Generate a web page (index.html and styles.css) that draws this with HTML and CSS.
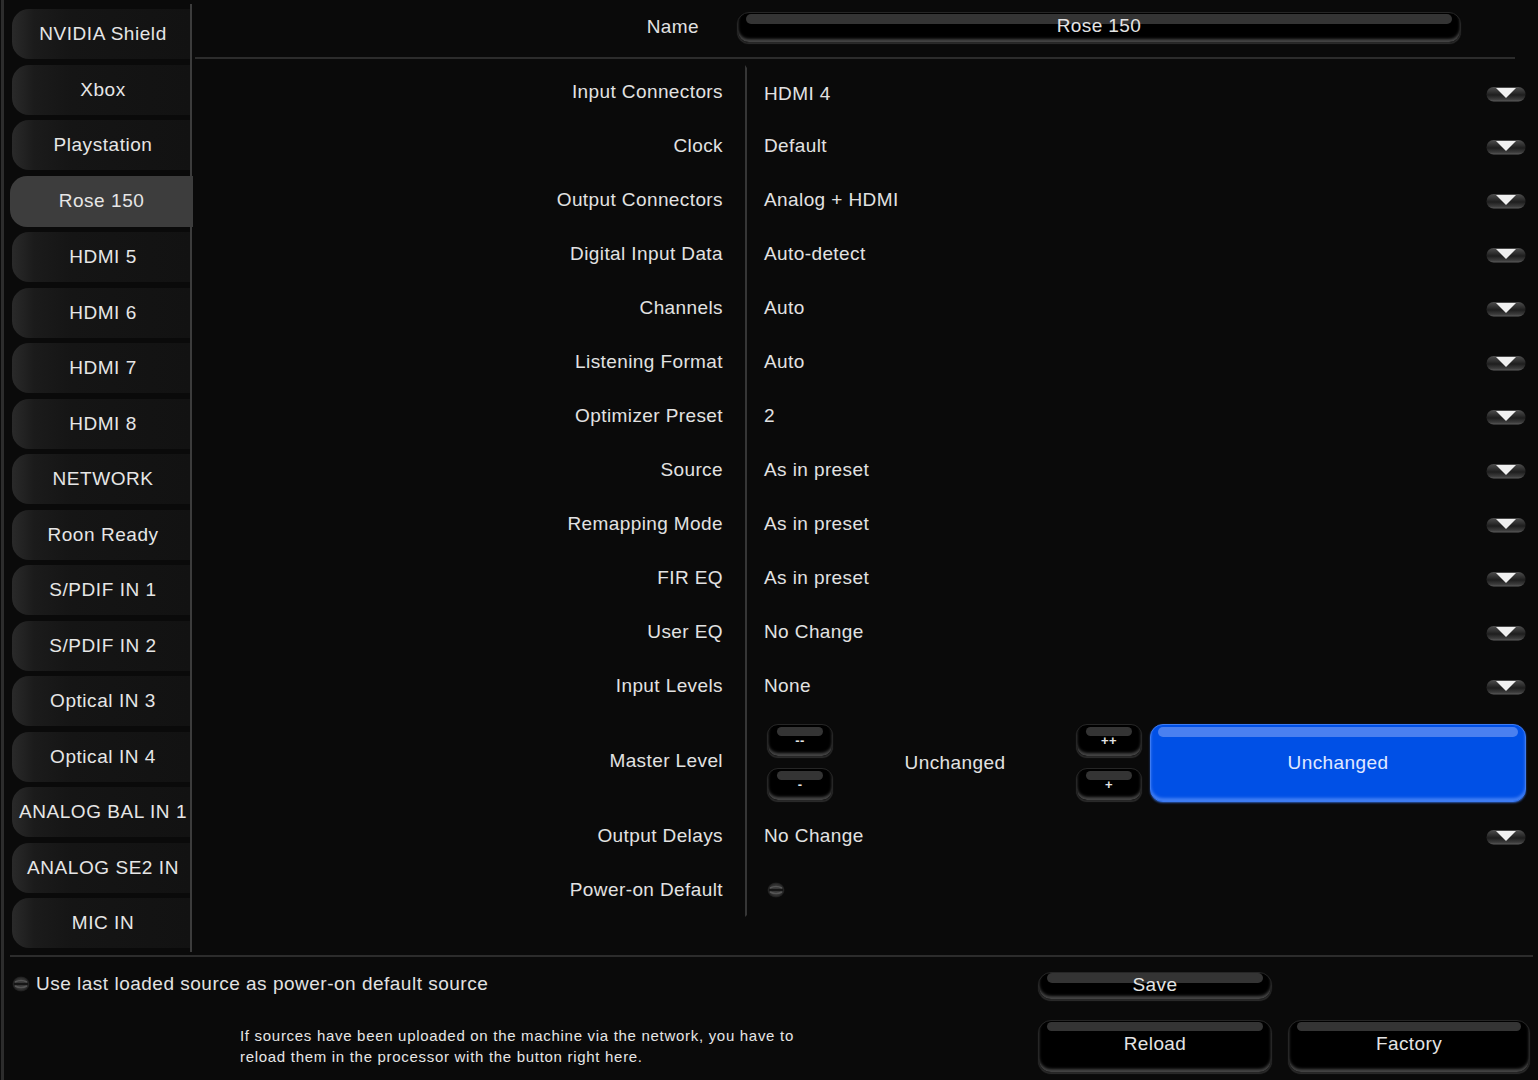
FILE: index.html
```html
<!DOCTYPE html>
<html>
<head>
<meta charset="utf-8">
<link rel="stylesheet" href="styles.css">
</head>
<body>
<svg class="defs" width="0" height="0">
  <defs>
    <linearGradient id="arrowBg" x1="0" y1="0" x2="0" y2="1">
      <stop offset="0" stop-color="#4e4e4e"/>
      <stop offset="0.55" stop-color="#1e1e1e"/>
      <stop offset="0.85" stop-color="#3c3c3c"/>
      <stop offset="1" stop-color="#5c5c5c"/>
    </linearGradient>
    <radialGradient id="radioBg" cx="0.5" cy="0.5" r="0.5">
      <stop offset="0" stop-color="#3a3a3a"/>
      <stop offset="0.7" stop-color="#333"/>
      <stop offset="1" stop-color="#1a1a1a"/>
    </radialGradient>
  </defs>
</svg>
<div class="app">
  <div class="top">
    <nav class="sidebar">
      <div class="src">NVIDIA Shield</div>
      <div class="src">Xbox</div>
      <div class="src">Playstation</div>
      <div class="src active">Rose 150</div>
      <div class="src">HDMI 5</div>
      <div class="src">HDMI 6</div>
      <div class="src">HDMI 7</div>
      <div class="src">HDMI 8</div>
      <div class="src">NETWORK</div>
      <div class="src">Roon Ready</div>
      <div class="src">S/PDIF IN 1</div>
      <div class="src">S/PDIF IN 2</div>
      <div class="src">Optical IN 3</div>
      <div class="src">Optical IN 4</div>
      <div class="src">ANALOG BAL IN 1</div>
      <div class="src">ANALOG SE2 IN</div>
      <div class="src">MIC IN</div>
    </nav>
    <main class="main">
      <div class="header">
        <div class="name-label">Name</div>
        <div class="name-input btn">Rose 150</div>
      </div>
      <div class="form">
        <div class="row"><div class="label">Input Connectors</div><div class="value"><span class="val">HDMI 4</span><svg class="arrow" width="40" height="16" viewBox="0 0 40 16"><rect x="0.5" y="1" width="39" height="14.5" rx="7.2" fill="url(#arrowBg)"/><path d="M10 2 L30 2 L20 12 Z" fill="#f0f0f0"/></svg></div></div>
        <div class="row"><div class="label">Clock</div><div class="value"><span class="val">Default</span><svg class="arrow" width="40" height="16" viewBox="0 0 40 16"><rect x="0.5" y="1" width="39" height="14.5" rx="7.2" fill="url(#arrowBg)"/><path d="M10 2 L30 2 L20 12 Z" fill="#f0f0f0"/></svg></div></div>
        <div class="row"><div class="label">Output Connectors</div><div class="value"><span class="val">Analog + HDMI</span><svg class="arrow" width="40" height="16" viewBox="0 0 40 16"><rect x="0.5" y="1" width="39" height="14.5" rx="7.2" fill="url(#arrowBg)"/><path d="M10 2 L30 2 L20 12 Z" fill="#f0f0f0"/></svg></div></div>
        <div class="row"><div class="label">Digital Input Data</div><div class="value"><span class="val">Auto-detect</span><svg class="arrow" width="40" height="16" viewBox="0 0 40 16"><rect x="0.5" y="1" width="39" height="14.5" rx="7.2" fill="url(#arrowBg)"/><path d="M10 2 L30 2 L20 12 Z" fill="#f0f0f0"/></svg></div></div>
        <div class="row"><div class="label">Channels</div><div class="value"><span class="val">Auto</span><svg class="arrow" width="40" height="16" viewBox="0 0 40 16"><rect x="0.5" y="1" width="39" height="14.5" rx="7.2" fill="url(#arrowBg)"/><path d="M10 2 L30 2 L20 12 Z" fill="#f0f0f0"/></svg></div></div>
        <div class="row"><div class="label">Listening Format</div><div class="value"><span class="val">Auto</span><svg class="arrow" width="40" height="16" viewBox="0 0 40 16"><rect x="0.5" y="1" width="39" height="14.5" rx="7.2" fill="url(#arrowBg)"/><path d="M10 2 L30 2 L20 12 Z" fill="#f0f0f0"/></svg></div></div>
        <div class="row"><div class="label">Optimizer Preset</div><div class="value"><span class="val">2</span><svg class="arrow" width="40" height="16" viewBox="0 0 40 16"><rect x="0.5" y="1" width="39" height="14.5" rx="7.2" fill="url(#arrowBg)"/><path d="M10 2 L30 2 L20 12 Z" fill="#f0f0f0"/></svg></div></div>
        <div class="row"><div class="label">Source</div><div class="value"><span class="val">As in preset</span><svg class="arrow" width="40" height="16" viewBox="0 0 40 16"><rect x="0.5" y="1" width="39" height="14.5" rx="7.2" fill="url(#arrowBg)"/><path d="M10 2 L30 2 L20 12 Z" fill="#f0f0f0"/></svg></div></div>
        <div class="row"><div class="label">Remapping Mode</div><div class="value"><span class="val">As in preset</span><svg class="arrow" width="40" height="16" viewBox="0 0 40 16"><rect x="0.5" y="1" width="39" height="14.5" rx="7.2" fill="url(#arrowBg)"/><path d="M10 2 L30 2 L20 12 Z" fill="#f0f0f0"/></svg></div></div>
        <div class="row"><div class="label">FIR EQ</div><div class="value"><span class="val">As in preset</span><svg class="arrow" width="40" height="16" viewBox="0 0 40 16"><rect x="0.5" y="1" width="39" height="14.5" rx="7.2" fill="url(#arrowBg)"/><path d="M10 2 L30 2 L20 12 Z" fill="#f0f0f0"/></svg></div></div>
        <div class="row"><div class="label">User EQ</div><div class="value"><span class="val">No Change</span><svg class="arrow" width="40" height="16" viewBox="0 0 40 16"><rect x="0.5" y="1" width="39" height="14.5" rx="7.2" fill="url(#arrowBg)"/><path d="M10 2 L30 2 L20 12 Z" fill="#f0f0f0"/></svg></div></div>
        <div class="row"><div class="label">Input Levels</div><div class="value"><span class="val">None</span><svg class="arrow" width="40" height="16" viewBox="0 0 40 16"><rect x="0.5" y="1" width="39" height="14.5" rx="7.2" fill="url(#arrowBg)"/><path d="M10 2 L30 2 L20 12 Z" fill="#f0f0f0"/></svg></div></div>
        <div class="row master"><div class="label">Master Level</div><div class="value">
          <div class="stepcol"><div class="btn step">--</div><div class="btn step">-</div></div>
          <div class="level-text">Unchanged</div>
          <div class="stepcol"><div class="btn step">++</div><div class="btn step">+</div></div>
          <div class="blue-btn">Unchanged</div>
        </div></div>
        <div class="row"><div class="label">Output Delays</div><div class="value"><span class="val">No Change</span><svg class="arrow" width="40" height="16" viewBox="0 0 40 16"><rect x="0.5" y="1" width="39" height="14.5" rx="7.2" fill="url(#arrowBg)"/><path d="M10 2 L30 2 L20 12 Z" fill="#f0f0f0"/></svg></div></div>
        <div class="row"><div class="label">Power-on Default</div><div class="value"><svg class="radio radio-pod" width="18" height="16" viewBox="0 0 18 16"><ellipse cx="9" cy="8" rx="8.5" ry="7.5" fill="url(#radioBg)"/><path d="M3 6 Q9 3 15 6 M3 10 Q9 13 15 10" stroke="#555" stroke-width="1.5" fill="none"/><path d="M2 8 H16" stroke="#161616" stroke-width="2"/></svg></div></div>
      </div>
    </main>
  </div>
  <div class="bottom">
    <div class="bottom-left">
      <div class="check"><svg class="radio" width="18" height="16" viewBox="0 0 18 16"><ellipse cx="9" cy="8" rx="8.5" ry="7.5" fill="url(#radioBg)"/><path d="M3 6 Q9 3 15 6 M3 10 Q9 13 15 10" stroke="#555" stroke-width="1.5" fill="none"/><path d="M2 8 H16" stroke="#161616" stroke-width="2"/></svg><span>Use last loaded source as power-on default source</span></div>
      <p class="help">If sources have been uploaded on the machine via the network, you have to<br>reload them in the processor with the button right here.</p>
    </div>
    <div class="actions">
      <div class="btn act save">Save</div>
      <div class="spacer"></div>
      <div class="btn act big">Reload</div>
      <div class="btn act big">Factory</div>
    </div>
  </div>
</div>
</body>
</html>
```
FILE: styles.css
```css
* { box-sizing: border-box; }
html, body { margin: 0; padding: 0; }
body {
  width: 1538px;
  height: 1080px;
  overflow: hidden;
  background: #0a0a0a;
  color: #e2e2e2;
  font-family: "Liberation Sans", Arial, sans-serif;
  font-size: 19px;
  letter-spacing: 0.4px;
}
.defs { display: block; width: 0; height: 0; }
.app {
  height: 1080px;
  margin-left: 1px;
  border-left: 3px solid #2c2c2c;
  display: flex;
  flex-direction: column;
}
.top { display: flex; height: 955px; }

/* sidebar */
.sidebar {
  width: 188px;
  flex: none;
  margin-top: 4px;
  margin-bottom: 3px;
  padding: 5px 0 0 8px;
  border-right: 2px solid #3c3c3c;
  display: flex;
  flex-direction: column;
  gap: 5.5px;
}
.src {
  width: 178px;
  height: 50px;
  flex: none;
  display: flex;
  align-items: center;
  justify-content: center;
  white-space: nowrap;
  padding-left: 4px;
  border-radius: 17px 0 0 17px;
  background: linear-gradient(to right, #2a2a2a 0, #1b1b1b 22px, #151515 60px, #121212 100%);
  color: #e6e6e6;
  letter-spacing: 0.55px;
}
.src.active {
  width: 183px;
  margin-left: -2px;
  margin-right: -3px;
  position: relative;
  background: #3d3d3d;
  height: 51px;
  padding-left: 0;
}

/* main */
.main { flex: 1; display: flex; flex-direction: column; }
.header {
  height: 59px;
  margin: 0 23px 0 3px;
  border-bottom: 2px solid #2c2c2c;
  display: flex;
  align-items: center;
}
.name-label { width: 504px; text-align: right; margin-top: -4px; }
.name-input {
  margin-left: 38px;
  width: 724px;
  height: 31px;
  margin-top: -3px;
  border-radius: 15px;
  padding-bottom: 2px;
}
.name-input::before { left: 8px; right: 7px; height: 11px; top: 1px; border-radius: 6px; }

.btn {
  position: relative;
  z-index: 0;
  background: #000;
  border: 1px solid #262626;
  border-radius: 12px;
  box-shadow: inset 0 -3px 3px rgba(115,115,115,0.6), 0 1px 1px #2d2d2d;
  display: flex;
  align-items: center;
  justify-content: center;
  color: #e4e4e4;
}
.btn::before {
  content: "";
  position: absolute;
  z-index: -1;
  top: 1px;
  left: 8px;
  right: 8px;
  height: 10px;
  border-radius: 6px;
  background: #343434;
}

.form { padding-top: 6px; display: flex; flex-direction: column; }
.row { display: flex; height: 54px; }
.label {
  width: 531px;
  flex: none;
  display: flex;
  align-items: center;
  justify-content: flex-end;
}
.value {
  flex: 1;
  margin-left: 22px;
  border-left: 2px solid #363636;
  padding: 0 12px 0 17px;
  display: flex;
  align-items: center;
}
.row:first-child .value { border-top: 3px solid #0a0a0a; }
.row:last-child .value { border-bottom: 2px solid #0a0a0a; }
.val { flex: 1; }
.arrow { flex: none; display: block; margin-top: 1px; }

.master { height: 96px; }
.master .value { padding-top: 3px; }
.stepcol {
  display: flex;
  flex-direction: column;
  gap: 11px;
  margin-left: 3px;
}
.step {
  width: 66px;
  height: 33px;
  font-size: 13px;
  font-weight: bold;
  border-radius: 11px;
}
.step::before { left: 9px; right: 9px; top: 2px; height: 9px; }
.level-text { flex: 1; text-align: center; padding-left: 4px; }
.blue-btn {
  position: relative;
  z-index: 0;
  margin-left: 8px;
  width: 376px;
  height: 78px;
  background: #0050e6;
  border: 1px solid #3d7bf2;
  border-radius: 13px;
  box-shadow: inset 0 -3px 3px rgba(120,165,255,0.55), 0 1px 2px #2b55a8;
  display: flex;
  align-items: center;
  justify-content: center;
  color: #e0e8ff;
}
.blue-btn::before {
  content: "";
  position: absolute;
  z-index: -1;
  top: 2px;
  left: 7px;
  right: 7px;
  height: 10px;
  border-radius: 6px;
  background: #4a80f0;
}
.radio { display: block; flex: none; }
.radio-pod { margin-left: 3px; margin-top: 2px; }

/* bottom */
.bottom {
  flex: 1;
  margin: 0 5px 0 6px;
  border-top: 2px solid #2c2c2c;
  display: flex;
}
.bottom-left { flex: 1; padding-top: 15px; }
.check {
  display: flex;
  align-items: center;
  gap: 6px;
  height: 24px;
  padding-left: 2px;
  letter-spacing: 0.5px;
}
.help {
  margin: 30px 0 0 230px;
  font-size: 15px;
  line-height: 20.5px;
  letter-spacing: 0.7px;
  color: #e6e6e6;
}
.actions {
  margin-right: 3px;
  padding-top: 15px;
  display: grid;
  grid-template-columns: 234px 242px;
  grid-template-rows: 28px 53px;
  column-gap: 16px;
  row-gap: 20px;
}
.act { border-radius: 13px; }
.save { padding-bottom: 2px; }
.save::before { height: 10px; top: 0; border-radius: 5px; }
.big { padding-bottom: 6px; }
.big::before { height: 9px; top: 1px; }
```
